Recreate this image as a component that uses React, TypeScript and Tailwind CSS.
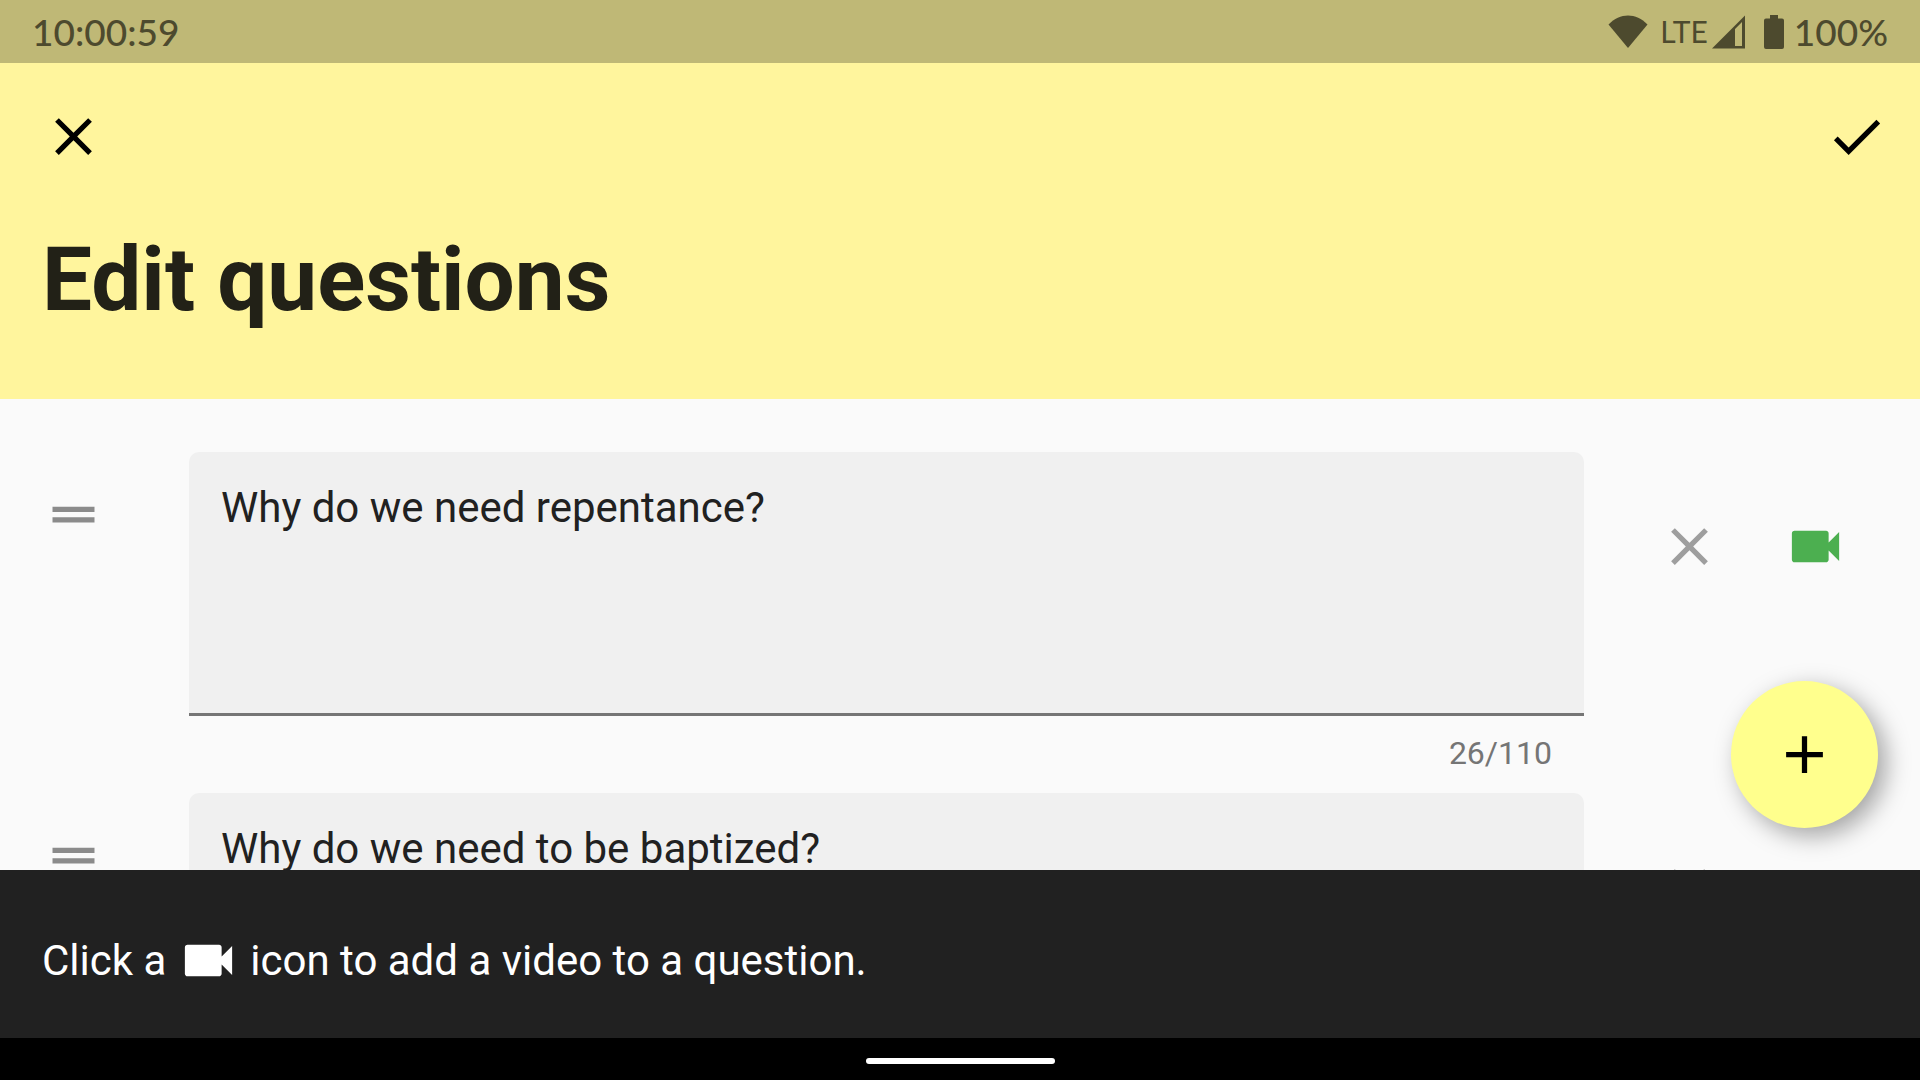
import React from "react";

type IconProps = { path: string; className?: string };

const CLOSE = "M19 6.41 17.59 5 12 10.59 6.41 5 5 6.41 10.59 12 5 17.59 6.41 19 12 13.41 17.59 19 19 17.59 13.41 12z";
const CHECK = "M9 16.17 4.83 12l-1.42 1.41L9 19 21 7l-1.41-1.41z";
const ADD = "M19 13h-6v6h-2v-6H5v-2h6V5h2v6h6z";
const DRAG = "M20 9H4v2h16V9zM4 15h16v-2H4v2z";
const VIDEO =
  "M17 10.5V7c0-.55-.45-1-1-1H4c-.55 0-1 .45-1 1v10c0 .55.45 1 1 1h12c.55 0 1-.45 1-1v-3.5l4 4v-11l-4 4z";

function Icon({ path, className = "" }: IconProps) {
  return (
    <svg viewBox="0 0 24 24" fill="currentColor" aria-hidden="true" className={`size-[63px] shrink-0 ${className}`}>
      <path d={path} />
    </svg>
  );
}

function StatusBar() {
  return (
    <div className="flex h-[63px] shrink-0 items-center justify-between bg-[#bfb876] px-8 font-['Lato',sans-serif] text-[37px] font-medium text-[#4d4a2e]">
      <time>10:00:59</time>
      <div className="flex items-center">
        <svg viewBox="0 0 40 34" className="h-[34px] w-10" fill="currentColor" aria-hidden="true">
          <path d="M0.500 9.500C12-2.500 28-2.500 39.500 9.500L20 33z" />
        </svg>
        <span className="ml-3 font-['Liberation_Sans_Narrow','Lato',sans-serif] text-[30px] font-normal">LTE</span>
        <svg viewBox="0 0 34 34" className="ml-1 h-[34px] w-[34px]" fill="currentColor" aria-hidden="true">
          <path fillRule="evenodd" d="M0 33.500 33 0.500V33.500zM23 14V31h7V7z" />
        </svg>
        <svg viewBox="0 0 20 34" className="ml-[18px] h-[34px] w-5" fill="currentColor" aria-hidden="true">
          <path d="M6 0h8v3.500h4a2 2 0 0 1 2 2V32a2 2 0 0 1-2 2H2a2 2 0 0 1-2-2V5.500a2 2 0 0 1 2-2h4z" />
        </svg>
        <span className="ml-[10px]">100%</span>
      </div>
    </div>
  );
}

function QuestionRow({ text }: { text: string }) {
  return (
    <li className="flex items-start px-[42px]">
      <button type="button" aria-label="Reorder question" className="mt-[31px] mr-[84px] text-[#8b8b8b]">
        <Icon path={DRAG} />
      </button>
      <div className="flex h-[341px] min-w-0 flex-1 flex-col">
        <textarea
          aria-label="Question"
          defaultValue={text}
          maxLength={110}
          className="block h-[264px] w-full resize-none rounded-t-[10px] border-b-[3px] border-[#757575] bg-[#f0f0f0] px-8 pt-[31px] text-[42px] leading-[49px] text-[#212121] outline-none"
        />
        <div className="mt-[18px] pr-8 text-right text-[32px] leading-[38px] text-[#757575]">{text.length}/110</div>
      </div>
      <div className="mt-[31px] ml-[42px] flex">
        <button type="button" aria-label="Delete question" className="flex size-[126px] items-center justify-center text-[#9e9e9e]">
          <Icon path={CLOSE} />
        </button>
        <button type="button" aria-label="Add video" className="flex size-[126px] items-center justify-center text-[#4caf50]">
          <Icon path={VIDEO} />
        </button>
      </div>
    </li>
  );
}

export default function App() {
  return (
    <div className="flex h-screen flex-col overflow-hidden bg-[#fafafa] font-['Roboto',sans-serif]">
      <StatusBar />
      <header className="shrink-0 bg-[#fff59d] pb-[66px]">
        <div className="flex items-center justify-between pt-[42px] pr-8 pl-[42px]">
          <button type="button" aria-label="Close">
            <Icon path={CLOSE} />
          </button>
          <button type="button" aria-label="Save">
            <Icon path={CHECK} />
          </button>
        </div>
        <h1 className="mt-[59px] px-[42px] text-[89px] leading-[106px] font-bold text-[#222117]">Edit questions</h1>
      </header>
      <main className="relative min-h-0 flex-1">
        <ul className="h-full overflow-hidden pt-[53px]">
          <QuestionRow text="Why do we need repentance?" />
          <QuestionRow text="Why do we need to be baptized?" />
        </ul>
        <button
          type="button"
          aria-label="Add question"
          className="absolute right-[42px] bottom-[42px] flex size-[147px] items-center justify-center rounded-full bg-[#ffff8d] text-black shadow-[8px_8px_24px_rgba(0,0,0,0.35)]"
        >
          <Icon path={ADD} />
        </button>
      </main>
      <div className="flex h-[168px] shrink-0 items-center bg-[#212121] px-[42px] pt-3 text-[42px] leading-[49px] text-white">
        <p className="flex items-center">
          Click a
          <Icon path={VIDEO} className="mr-[10px] ml-[11px]" />
          icon to add a video to a question.
        </p>
      </div>
      <div className="flex h-[42px] shrink-0 items-center justify-center bg-black pt-1">
        <div className="h-[6px] w-[189px] rounded-full bg-white" />
      </div>
    </div>
  );
}
